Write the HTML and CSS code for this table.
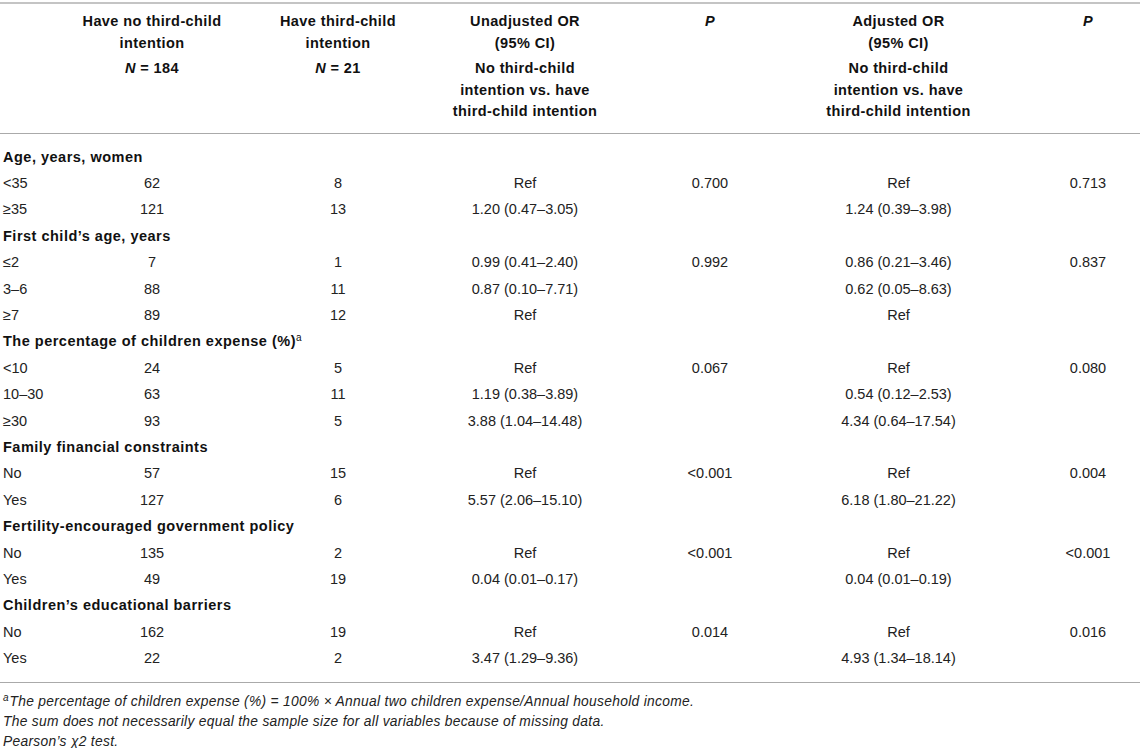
FILE: index.html
```html
<!DOCTYPE html>
<html lang="en">
<head>
<meta charset="utf-8">
<title>Third-child intention table</title>
<link rel="stylesheet" href="styles.css">
</head>
<body>
<table class="tbl">
  <colgroup>
    <col class="w0"><col class="w1"><col class="w2"><col class="w3"><col class="w4"><col class="w5"><col class="w6">
  </colgroup>
  <thead>
    <tr>
      <th></th>
      <th><div>Have no third-child<br>intention</div><div class="sub"><i>N</i> = 184</div></th>
      <th><div>Have third-child<br>intention</div><div class="sub"><i>N</i> = 21</div></th>
      <th><div>Unadjusted OR<br>(95% CI)</div><div class="sub">No third-child<br>intention vs. have<br>third-child intention</div></th>
      <th><i>P</i></th>
      <th class="c5"><div>Adjusted OR<br>(95% CI)</div><div class="sub">No third-child<br>intention vs. have<br>third-child intention</div></th>
      <th><i>P</i></th>
    </tr>
  </thead>
  <tbody>
    <tr class="sec first"><td colspan="7">Age, years, women</td></tr>
    <tr><td class="lab">&lt;35</td><td>62</td><td>8</td><td>Ref</td><td>0.700</td><td class="c5">Ref</td><td>0.713</td></tr>
    <tr><td class="lab">≥35</td><td>121</td><td>13</td><td>1.20 (0.47–3.05)</td><td></td><td class="c5">1.24 (0.39–3.98)</td><td></td></tr>
    <tr class="sec"><td colspan="7">First child’s age, years</td></tr>
    <tr><td class="lab">≤2</td><td>7</td><td>1</td><td>0.99 (0.41–2.40)</td><td>0.992</td><td class="c5">0.86 (0.21–3.46)</td><td>0.837</td></tr>
    <tr><td class="lab">3–6</td><td>88</td><td>11</td><td>0.87 (0.10–7.71)</td><td></td><td class="c5">0.62 (0.05–8.63)</td><td></td></tr>
    <tr><td class="lab">≥7</td><td>89</td><td>12</td><td>Ref</td><td></td><td class="c5">Ref</td><td></td></tr>
    <tr class="sec"><td colspan="7">The percentage of children expense (%)<sup>a</sup></td></tr>
    <tr><td class="lab">&lt;10</td><td>24</td><td>5</td><td>Ref</td><td>0.067</td><td class="c5">Ref</td><td>0.080</td></tr>
    <tr><td class="lab">10–30</td><td>63</td><td>11</td><td>1.19 (0.38–3.89)</td><td></td><td class="c5">0.54 (0.12–2.53)</td><td></td></tr>
    <tr><td class="lab">≥30</td><td>93</td><td>5</td><td>3.88 (1.04–14.48)</td><td></td><td class="c5">4.34 (0.64–17.54)</td><td></td></tr>
    <tr class="sec"><td colspan="7">Family financial constraints</td></tr>
    <tr><td class="lab">No</td><td>57</td><td>15</td><td>Ref</td><td>&lt;0.001</td><td class="c5">Ref</td><td>0.004</td></tr>
    <tr><td class="lab">Yes</td><td>127</td><td>6</td><td>5.57 (2.06–15.10)</td><td></td><td class="c5">6.18 (1.80–21.22)</td><td></td></tr>
    <tr class="sec"><td colspan="7">Fertility-encouraged government policy</td></tr>
    <tr><td class="lab">No</td><td>135</td><td>2</td><td>Ref</td><td>&lt;0.001</td><td class="c5">Ref</td><td>&lt;0.001</td></tr>
    <tr><td class="lab">Yes</td><td>49</td><td>19</td><td>0.04 (0.01–0.17)</td><td></td><td class="c5">0.04 (0.01–0.19)</td><td></td></tr>
    <tr class="sec"><td colspan="7">Children’s educational barriers</td></tr>
    <tr><td class="lab">No</td><td>162</td><td>19</td><td>Ref</td><td>0.014</td><td class="c5">Ref</td><td>0.016</td></tr>
    <tr class="last"><td class="lab">Yes</td><td>22</td><td>2</td><td>3.47 (1.29–9.36)</td><td></td><td class="c5">4.93 (1.34–18.14)</td><td></td></tr>
  </tbody>
</table>
<div class="notes">
  <p><sup>a</sup>The percentage of children expense (%) = 100% × Annual two children expense/Annual household income.</p>
  <p>The sum does not necessarily equal the sample size for all variables because of missing data.</p>
  <p>Pearson’s χ2 test.</p>
</div>
</body>
</html>
```
FILE: styles.css
```css
html, body {
  margin: 0;
  padding: 0;
  background: #fff;
}
body {
  font-family: "Liberation Sans", Arial, Helvetica, sans-serif;
  font-size: 14.5px;
  color: #222;
  width: 1143px;
}
.tbl {
  width: 1140px;
  margin-top: 2px;
  border-collapse: collapse;
  table-layout: fixed;
  border-top: 2px solid #c4c4c4;
  border-bottom: 1px solid #aaa;
}
.w0 { width: 59px; }
.w1 { width: 186px; }
.w2 { width: 186px; }
.w3 { width: 188px; }
.w4 { width: 182px; }
.w5 { width: 235px; }
.w6 { width: 104px; }

thead th {
  vertical-align: top;
  text-align: center;
  font-weight: bold;
  color: #111;
  letter-spacing: 0.4px;
  line-height: 21.5px;
  padding: 7px 0 10px;
  border-bottom: 1px solid #aaa;
}
thead th .sub {
  margin-top: 4px;
}
th.c5, td.c5 {
  padding-right: 40px;
}
tbody td {
  padding: 0;
  line-height: 26.4px;
  text-align: center;
  white-space: nowrap;
}
tbody td.lab {
  text-align: left;
  padding-left: 3px;
}
tbody tr.sec td {
  text-align: left;
  padding-left: 3px;
  font-weight: bold;
  color: #111;
  letter-spacing: 0.5px;
}
tbody tr.first td {
  padding-top: 10px;
}
tbody tr.last td {
  padding-bottom: 10px;
}
sup {
  font-size: 10px;
  line-height: 0;
  vertical-align: 5px;
  font-weight: normal;
  letter-spacing: 0;
}
.notes {
  padding: 9px 0 0 3px;
  font-style: italic;
  font-size: 13.8px;
  line-height: 20px;
  letter-spacing: 0.3px;
  color: #222;
}
.notes p {
  margin: 0;
}
.notes sup {
  vertical-align: 5px;
  font-size: 10px;
  margin-right: 1px;
}
```
